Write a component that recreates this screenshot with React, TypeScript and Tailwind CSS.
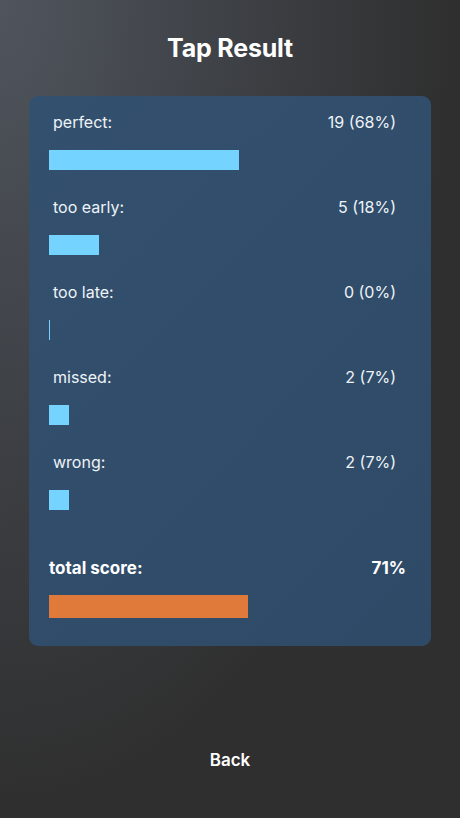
import React from "react";

const ROWS = [
  { label: "perfect:", value: "19 (68%)", pct: 68 },
  { label: "too early:", value: "5 (18%)", pct: 18 },
  { label: "too late:", value: "0 (0%)", pct: 0 },
  { label: "missed:", value: "2 (7%)", pct: 7 },
  { label: "wrong:", value: "2 (7%)", pct: 7 },
];

const TRACK = 280;

export default function App() {
  return (
    <div
      className="min-h-[818px] w-full flex flex-col items-center text-white bg-[radial-gradient(ellipse_at_0%_0%,#50555d_0%,#3e4146_35%,#2f2f2f_70%)] bg-[#2f2f2f]"
      style={{ fontFamily: "Inter, 'Noto Sans', sans-serif" }}
    >
      <h1 className="mt-[32px] h-[32px] leading-[32px] text-[25px] font-bold tracking-[-0.2px]">Tap Result</h1>

      <div className="mt-[32px] w-[402px] rounded-[9px] bg-[linear-gradient(135deg,#33506e,#2e4a67)] pl-[20px] pr-[25px] pt-[16px] pb-[28px]">
        <div className="flex flex-col gap-[27px]">
          {ROWS.map((r) => (
            <div key={r.label}>
              <div className="flex justify-between pl-[4px] pr-[10px] h-[20px] leading-[20px] text-[16px] text-[#eef3f8]">
                <span>{r.label}</span>
                <span>{r.value}</span>
              </div>
              <div
                className="mt-[18px] h-[20px] bg-[#74d4ff]"
                style={{ width: Math.max(1, Math.round((TRACK * r.pct) / 100)) }}
              />
            </div>
          ))}
        </div>

        <div className="mt-[47px] flex justify-between h-[22px] leading-[22px] text-[17px] font-bold">
          <span>total score:</span>
          <span>71%</span>
        </div>
        <div className="mt-[16px] h-[23px] bg-[#df7a3b]" style={{ width: Math.round(TRACK * 0.71) }} />
      </div>

      <button className="mt-[102px] h-[24px] leading-[24px] text-[17px] font-semibold text-white">Back</button>
    </div>
  );
}
